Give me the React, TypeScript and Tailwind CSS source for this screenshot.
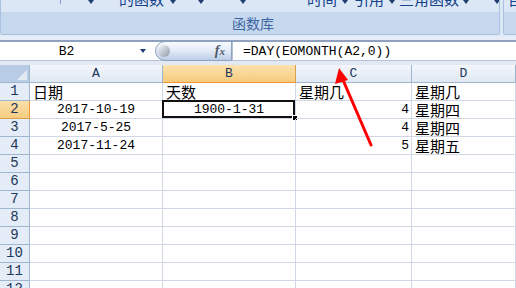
import React from "react";

const CJK = "font-['Noto_Sans_CJK_SC','Noto_Sans',sans-serif]";
const MONO = "font-['Liberation_Mono','Noto_Sans_CJK_SC',monospace]";

function Tri({ className = "" }: { className?: string }) {
  return (
    <svg width="6" height="4" viewBox="0 0 6 4" className={`shrink-0 ${className}`}>
      <path d="M0 0 L6 0 L3 4 Z" fill="#1f3f6e" />
    </svg>
  );
}

function Zh({ children }: { children: React.ReactNode }) {
  return <span className={`${CJK} inline-block h-[16px] text-[15px] leading-[16px] overflow-hidden`}>{children}</span>;
}

function Label({ children }: { children: React.ReactNode }) {
  return (
    <span className={`${CJK} shrink-0 whitespace-nowrap -mt-[9px] self-start text-[15px] leading-[15px] text-[#15428b]`}>
      {children}
    </span>
  );
}

function Gap({ w }: { w: string }) {
  return <div className={`shrink-0 ${w}`} />;
}

type Cell = { t?: React.ReactNode; align?: "l" | "c" | "r" };

const rows: Cell[][] = [
  [{ t: <Zh>日期</Zh>, align: "l" }, { t: <Zh>天数</Zh>, align: "l" }, { t: <Zh>星期几</Zh>, align: "l" }, { t: <Zh>星期几</Zh>, align: "l" }],
  [{ t: "2017-10-19", align: "c" }, { t: "1900-1-31", align: "c" }, { t: "4", align: "r" }, { t: <Zh>星期四</Zh>, align: "l" }],
  [{ t: "2017-5-25", align: "c" }, {}, { t: "4", align: "r" }, { t: <Zh>星期四</Zh>, align: "l" }],
  [{ t: "2017-11-24", align: "c" }, {}, { t: "5", align: "r" }, { t: <Zh>星期五</Zh>, align: "l" }],
  [{}, {}, {}, {}],
  [{}, {}, {}, {}],
  [{}, {}, {}, {}],
  [{}, {}, {}, {}],
  [{}, {}, {}, {}],
  [{}, {}, {}, {}],
  [{}, {}, {}, {}],
  [{}, {}, {}, {}],
];

export default function App() {
  return (
    <div className={`relative w-[516px] h-[288px] overflow-hidden bg-white ${MONO} text-[13px] text-black`}>
      {/* Ribbon */}
      <div className="flex h-[36px] bg-[#dde8f5]">
        <div className="w-[500px] shrink-0 h-[35px] flex flex-col rounded-b-[3px] border-b border-r border-l border-[#a9c0de] overflow-hidden">
          <div className="h-[12px] bg-[#dce7f5] overflow-hidden">
            <div className="flex h-[12px] items-start">
              <Gap w="w-[59px]" />
              <div className="shrink-0 w-px h-[4px] bg-[#7f9fc8]" />
              <Gap w="w-[27px]" />
              <Tri />
              <Gap w="w-[25px]" />
              <Label>的函数</Label>
              <Gap w="w-[6px]" />
              <Tri />
              <Gap w="w-[22px]" />
              <Tri />
              <Gap w="w-[36px]" />
              <Tri />
              <Gap w="w-[61px]" />
              <Label>时间</Label>
              <Gap w="w-[5px]" />
              <Tri />
              <Gap w="w-[6px]" />
              <Label>引用</Label>
              <Gap w="w-[5px]" />
              <Tri />
              <Gap w="w-[4px]" />
              <Label>三角函数</Label>
              <Gap w="w-[4px]" />
              <Tri />
              <Gap w="w-[25px]" />
              <Tri />
            </div>
          </div>
          <div className="flex-1 bg-[#c5d8ee] flex items-center">
            <Gap w="w-[231px]" />
            <span className={`${CJK} whitespace-nowrap text-[14px] leading-none text-[#3d65a0]`}>函数库</span>
          </div>
        </div>
        <div className="w-[3px] shrink-0" />
        <div className="flex-1 h-[35px] flex flex-col rounded-bl-[3px] border-b border-l border-[#a9c0de] overflow-hidden">
          <div className="h-[12px] bg-[#dce7f5] pl-[4px] overflow-hidden">
            <span className={`${CJK} block -mt-[9px] text-[15px] leading-[15px] text-[#15428b]`}>自</span>
          </div>
          <div className="flex-1 bg-[#c5d8ee]" />
        </div>
      </div>
      <div className="h-[4px] bg-[#e6edf7]" />

      {/* Formula bar */}
      <div className="flex h-[21px] border-t-2 border-[#8ea2bf] border-b border-b-[#b3c2d6] bg-white">
        <div className="w-[155px] flex items-center">
          <div className="w-[133px] flex justify-center leading-none">B2</div>
          <Gap w="w-[7px]" />
          <Tri />
        </div>
        <div className="w-[77px] h-[20px] -mt-[1px] rounded-l-full border border-[#8ea2bf] bg-gradient-to-b from-[#f7faff] via-[#e2eaf6] to-[#bccde6] flex items-center pl-[2px] pr-[6px]">
          <div className="w-[12px] h-[12px] rounded-full bg-gradient-to-br from-[#f3f5f8] via-[#c3c9d2] to-[#8e98a6]" />
          <div className="flex-1" />
          <span className="font-['Liberation_Serif',serif] italic font-bold text-[14px] text-[#50596a] leading-none">
            f<span className="text-[11px]">x</span>
          </span>
        </div>
        <div className="flex-1 flex items-center pl-[10px] leading-none border-l border-[#b3c2d6]">=DAY(EOMONTH(A2,0))</div>
      </div>
      <div className="h-[4px] bg-[#e3e9f2]" />

      {/* Grid */}
      <div className="grid grid-cols-[30px_133px_133px_116px_1fr] auto-rows-[18px]">
        <div className="bg-[#b8cce6] border-r border-b border-[#9eb6ce] relative overflow-hidden">
          <svg className="absolute right-[2px] bottom-[2px]" width="10" height="10" viewBox="0 0 10 10">
            <path d="M10 0 L10 10 L0 10 Z" fill="#e3eaf4" />
          </svg>
        </div>
        {["A", "B", "C", "D"].map((c) => (
          <div
            key={c}
            className={
              c === "B"
                ? "flex items-center justify-center bg-gradient-to-b from-[#fbe2b0] to-[#f6cb7c] border-r border-b border-r-[#d9a04a] border-b-[#f29536] text-[#1c3759]"
                : "flex items-center justify-center bg-gradient-to-b from-[#f3f6fb] to-[#e0e8f3] border-r border-b border-[#9eb6ce] text-[#1c3759]"
            }
          >
            {c}
          </div>
        ))}
        {rows.map((r, i) => (
          <React.Fragment key={i}>
            <div
              className={
                i === 1
                  ? "flex items-center justify-center bg-gradient-to-b from-[#fbe0aa] to-[#f6cc80] border-r border-b border-r-[#f29536] border-b-[#d9a04a] text-[#1c3759] text-[14px]"
                  : "flex items-center justify-center bg-[#e4ecf7] border-r border-b border-[#9eb6ce] text-[#1c3759] text-[14px]"
              }
            >
              {i + 1}
            </div>
            {r.map((cell, j) => (
              <div
                key={j}
                className={`relative flex items-center border-r border-b border-[#d0d7e5] whitespace-nowrap leading-none ${
                  cell.align === "c" ? "justify-center" : cell.align === "r" ? "justify-end pr-[2px]" : "justify-start pl-[3px]"
                }`}
              >
                {cell.t}
                {i === 1 && j === 1 && (
                  <>
                    <div className="absolute -left-[1px] -top-[1px] right-0 bottom-0 border-2 border-[#111]" />
                    <div className="absolute -right-[3px] -bottom-[3px] w-[6px] h-[6px] bg-black border border-white" />
                  </>
                )}
              </div>
            ))}
          </React.Fragment>
        ))}
      </div>

      {/* Red arrow annotation */}
      <svg className="absolute left-0 top-0 pointer-events-none" width="516" height="288" viewBox="0 0 516 288">
        <line x1="371" y1="145" x2="343" y2="80" stroke="#ff0000" strokeWidth="3" strokeLinecap="round" />
        <path d="M339 68 L335 84 L348 80 Z" fill="#ff0000" />
      </svg>
    </div>
  );
}
